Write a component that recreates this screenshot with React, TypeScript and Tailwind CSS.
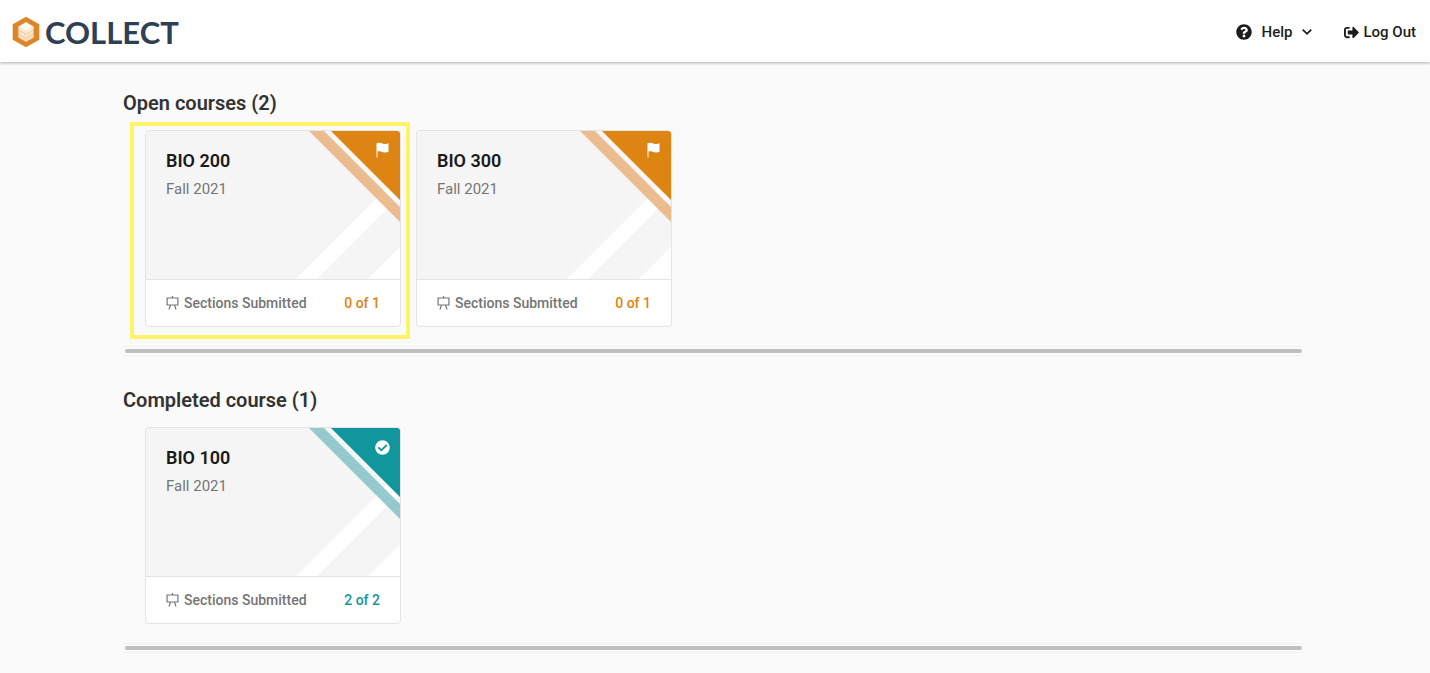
import { FaCheckCircle, FaQuestionCircle, FaSignOutAlt } from "react-icons/fa";

type Course = {
  name: string;
  term: string;
  submitted: number;
  sections: number;
  highlighted?: boolean;
};

const openCourses: Course[] = [
  { name: "BIO 200", term: "Fall 2021", submitted: 0, sections: 1, highlighted: true },
  { name: "BIO 300", term: "Fall 2021", submitted: 0, sections: 1 },
];

const completedCourses: Course[] = [
  { name: "BIO 100", term: "Fall 2021", submitted: 2, sections: 2 },
];

function Logo() {
  return (
    <a href="#" className="flex items-center gap-[5px] text-[#2f4055]">
      <svg viewBox="0 0 28 32" className="h-8 w-7" aria-hidden="true">
        <path d="M14 .8 27.3 8.2V23.8L14 31.2.7 23.8V8.2Z" fill="#de8528" />
        <path d="M6.500 10.400 14 14.800l7.500-4.400V21.500L14 25.800 6.500 21.500Z" fill="#f3c795" />
        <path d="M6.500 18.500 14 22.700l7.500-4.200V21.500L14 25.800 6.500 21.500Z" fill="#f9dfc2" />
        <path d="M6.500 14.500 14 18.700l7.500-4.200V17.500L14 21.700 6.500 17.500Z" fill="#fae5cd" />
        <path d="M6.500 10.400 14 14.600l7.500-4.200V13.500L14 17.700 6.500 13.500Z" fill="#fcecd9" />
        <path d="m14 6 7.500 4.400L14 14.800l-7.500-4.400Z" fill="#fff9f2" />
      </svg>
      <span className="font-['Lato',sans-serif] text-[31px] leading-8 font-bold">COLLECT</span>
    </a>
  );
}

function Header() {
  return (
    <header className="relative flex h-[62px] items-center justify-between bg-white pt-[2px] pr-[14px] pl-3 shadow-[0_1px_3px_rgba(0,0,0,0.3)]">
      <Logo />
      <nav className="flex items-center gap-8 text-[15px] leading-5 font-medium text-[#1c1c1c]">
        <button type="button" className="flex items-center gap-[10px]">
          <FaQuestionCircle className="size-4" />
          Help
          <svg viewBox="0 0 10 10" className="size-[10px]" fill="none" stroke="currentColor" strokeWidth="1.8" aria-hidden="true">
            <path d="m.8 2.600 4.200 4.200 4.200-4.200" />
          </svg>
        </button>
        <a href="#" className="flex items-center gap-1">
          <FaSignOutAlt className="size-[15px]" />
          Log Out
        </a>
      </nav>
    </header>
  );
}

function BoardIcon() {
  return (
    <svg viewBox="0 0 13 14" className="mr-[5px] h-[14px] w-[13px]" fill="none" stroke="currentColor" strokeWidth="1.2" aria-hidden="true">
      <path d="M1.100 2h10.800v7H1.100ZM6.500 0v2M4.500 9 3 13.500M8.500 9l1.500 4.500" />
    </svg>
  );
}

function CardArt({ done }: { done: boolean }) {
  return (
    <svg
      viewBox="0 0 108 148"
      className={`absolute top-0 right-0 h-full w-[108px] ${done ? "text-[#12969d]" : "text-[#dd8413]"}`}
      aria-hidden="true"
    >
      <path d="M4 148 108 44v21L25 148ZM76 148l32-32v32Z" fill="#fff" />
      <path d="M17 0h15l76 76v15Z" fill={done ? "#7fc1c3" : "#e9b07c"} fillOpacity="0.83" />
      <path d="M39 0h69v69Z" fill="currentColor" />
      {!done && (
        <path d="M84.5 12.3c2.200-1 4-.7 6 .1 2 .7 4 .8 6-.2v8.600c-2 .9-4 .8-6 .1-1.800-.7-3.300-.8-5-.3v5.800h-1Z" fill="#fff" />
      )}
    </svg>
  );
}

function CourseCard({ course }: { course: Course }) {
  const done = course.submitted === course.sections;

  return (
    <li className="relative w-64">
      <a href="#" className="block overflow-hidden rounded border border-[#e4e4e4] bg-white">
        <div className="relative h-[148px] bg-[#f5f5f5] px-5 pt-[18px]">
          <CardArt done={done} />
          {done && <FaCheckCircle className="absolute top-3 right-[10px] size-[15px] text-white" />}
          <h3 className="text-lg leading-6 font-semibold text-[#1a1a1a]">{course.name}</h3>
          <p className="mt-1 text-[15px] leading-6 text-[#757575]">{course.term}</p>
        </div>
        <div className="flex h-[47px] items-center border-t border-[#e4e4e4] px-5 text-sm font-medium text-[#757575]">
          <BoardIcon />
          Sections Submitted
          <span className={`ml-auto ${done ? "text-[#12969d]" : "text-[#dd8413]"}`}>
            {course.submitted} of {course.sections}
          </span>
        </div>
      </a>
      {course.highlighted && (
        <div className="pointer-events-none absolute -top-2 -right-[9px] -bottom-3 -left-[15px] border-4 border-[#fff467]" />
      )}
    </li>
  );
}

function CourseSection({ title, courses }: { title: string; courses: Course[] }) {
  return (
    <section>
      <h2 className="text-xl leading-7 font-semibold text-[#333]">{title}</h2>
      <ul className="mt-[13px] flex gap-[15px] pl-[22px]">
        {courses.map((course) => (
          <CourseCard key={course.name} course={course} />
        ))}
      </ul>
      {/* horizontal scroll track */}
      <div className="mt-[19px] border-y border-[#f2f2f2] py-[2px] pr-1 pl-[2px]">
        <div className="h-1 rounded-full bg-[#c0c0c0]" />
      </div>
    </section>
  );
}

export default function App() {
  return (
    <div className="min-h-screen bg-[#fafafa] font-['Roboto',sans-serif]">
      <Header />
      <main className="flex flex-col gap-[30px] pt-[27px] pr-[124px] pl-[123px]">
        <CourseSection title={`Open courses (${openCourses.length})`} courses={openCourses} />
        <CourseSection title={`Completed course (${completedCourses.length})`} courses={completedCourses} />
      </main>
    </div>
  );
}
